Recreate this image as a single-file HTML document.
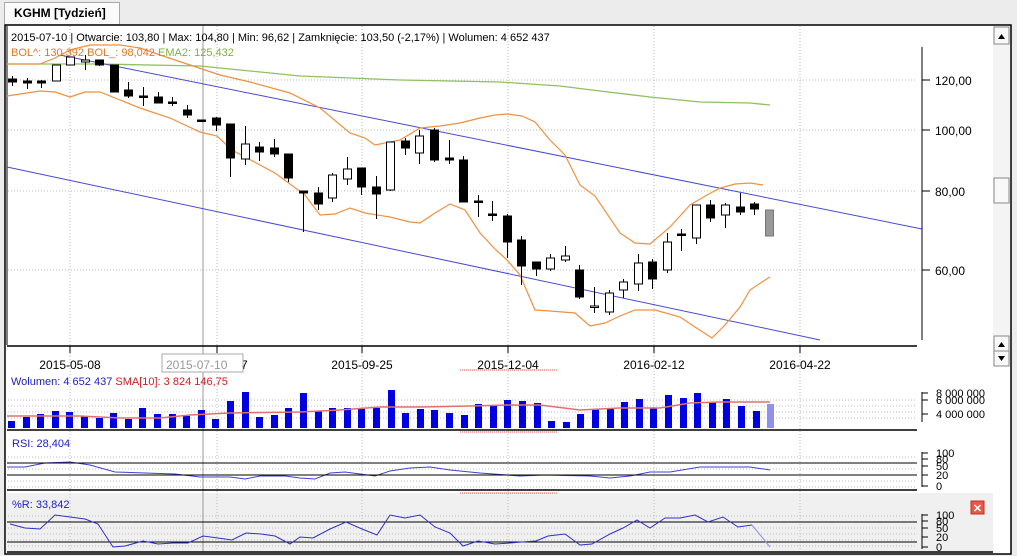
<!DOCTYPE html>
<html><head><meta charset="utf-8">
<style>
html,body{margin:0;padding:0;}
body{width:1017px;height:556px;overflow:hidden;background:#ececec;font-family:"Liberation Sans",sans-serif;position:relative;}
.tab{position:absolute;left:4px;top:2px;width:116px;height:22px;background:#fbfbfb;border:1px solid #a9a9a9;border-bottom:none;font-weight:bold;font-size:12px;line-height:20px;padding-left:9px;box-sizing:border-box;}
svg{position:absolute;left:0;top:0;}
</style></head><body>
<div class="tab">KGHM [Tydzień]</div>
<svg id="s" width="1017" height="556" xmlns="http://www.w3.org/2000/svg" font-family="Liberation Sans, sans-serif">
<rect x="5" y="25" width="1006" height="529" fill="#fff" stroke="#000" stroke-width="1.5"/>
<rect x="6" y="493" width="987" height="60" fill="#f0f0f0"/>
<g id="grid" stroke="#bbb" stroke-dasharray="1,2" stroke-width="1"></g>
<line x1="203" y1="26" x2="203" y2="552" stroke="#999"/>
<line x1="7" y1="26" x2="7" y2="345" stroke="#000"/>
<g id="main"></g>
<line x1="922" y1="47" x2="922" y2="340" stroke="#000"/>
<g font-size="12" fill="#000">
<line x1="922" y1="80" x2="930" y2="80" stroke="#000"/><text x="935" y="85">120,00</text>
<line x1="922" y1="130" x2="930" y2="130" stroke="#000"/><text x="935" y="135">100,00</text>
<line x1="922" y1="191" x2="930" y2="191" stroke="#000"/><text x="935" y="196">80,00</text>
<line x1="922" y1="270" x2="930" y2="270" stroke="#000"/><text x="935" y="275">60,00</text>
</g>
<line x1="7" y1="346" x2="917" y2="346" stroke="#000" stroke-width="1.5"/>
<g stroke="#000"><line x1="70" y1="346" x2="70" y2="353"/><line x1="217" y1="346" x2="217" y2="353"/><line x1="362" y1="346" x2="362" y2="353"/><line x1="508" y1="346" x2="508" y2="353"/><line x1="654" y1="346" x2="654" y2="353"/><line x1="800" y1="346" x2="800" y2="353"/></g>
<g font-size="12" fill="#000" text-anchor="middle">
<text x="70" y="369">2015-05-08</text><text x="217" y="369">2015-07-17</text><text x="362" y="369">2015-09-25</text><text x="508" y="369">2015-12-04</text><text x="654" y="369">2016-02-12</text><text x="800" y="369">2016-04-22</text>
</g>
<rect x="162" y="354" width="81" height="18" fill="#fff" stroke="#aaa"/>
<text x="166" y="369" font-size="12" fill="#999">2015-07-10</text>
<g stroke="#e05050" stroke-dasharray="1,1"><line x1="460" y1="370" x2="558" y2="370"/><line x1="460" y1="432" x2="558" y2="432"/><line x1="460" y1="493" x2="558" y2="493"/></g>
<text x="11" y="385" font-size="11" fill="#2020c0">Wolumen: 4 652 437 <tspan fill="#d02020">SMA[10]: 3 824 146,75</tspan></text>
<g id="vol"></g>
<line x1="7" y1="430" x2="917" y2="430" stroke="#000" stroke-width="1.5"/>
<line x1="7" y1="490" x2="917" y2="490" stroke="#000" stroke-width="1.5"/>
<line x1="7" y1="552" x2="993" y2="552" stroke="#000" stroke-width="1.5"/>
<text x="12" y="447" font-size="11" fill="#2020c0">RSI: 28,404</text>
<text x="12" y="508" font-size="11" fill="#2020c0">%R: 33,842</text>
<g id="ax" font-size="11" fill="#000"></g>
<rect x="971" y="501" width="13" height="13" fill="#e8584a" stroke="#c03020"/>
<text x="977.5" y="512" font-size="11" font-weight="bold" fill="#fff" text-anchor="middle">✕</text>
<rect x="993" y="26" width="17" height="340" fill="#f4f4f4"/>
<rect x="994" y="27" width="15" height="17" fill="#f8f8f8" stroke="#888"/><path d="M998 39h7l-3.5-5z" fill="#000"/>
<rect x="994" y="178" width="15" height="25" fill="#f8f8f8" stroke="#888"/>
<rect x="994" y="336" width="15" height="15" fill="#f8f8f8" stroke="#888"/><path d="M998 347h7l-3.5-5z" fill="#000"/>
<rect x="994" y="351" width="15" height="15" fill="#f8f8f8" stroke="#888"/><path d="M998 356h7l-3.5 5z" fill="#000"/>
<text x="11" y="41" font-size="11" fill="#000">2015-07-10 | Otwarcie: 103,80 | Max: 104,80 | Min: 96,62 | Zamknięcie: 103,50 (-2,17%)  | Wolumen: 4 652 437</text>
<text x="11" y="56" font-size="11" fill="#e07820">BOL^: 130,392  BOL_: 98,042 <tspan fill="#80b040">EMA2: 125,432</tspan></text>
</svg>
<script>
const NS="http://www.w3.org/2000/svg";
function el(p,t,a){const e=document.createElementNS(NS,t);for(const k in a)e.setAttribute(k,a[k]);document.getElementById(p).appendChild(e);return e;}
// grid
[80,130,191,270,400,406,412,418,457,463,469,475,481,487,516,522,528,534,540,546].forEach(y=>el("grid","line",{x1:8,y1:y,x2:917,y2:y}));
[70,217,362,508,654,800].forEach(x=>el("grid","line",{x1:x,y1:26,x2:x,y2:552}));
function pl(g,pts,c,w){el(g,"polyline",{points:pts,fill:"none",stroke:c,"stroke-width":w||1});}
pl("main","7,64 100,64 200,66 300,76 400,80 500,82 560,86 600,91 650,97 700,102 750,103 770,105","#90c060",1.3);
pl("main","60,55 922,229","#4848d8",1);pl("main","7,167 820,340","#4848d8",1);
pl("main","7,64 40,64 55,58 70,50 90,45 120,45 140,48 160,55 190,65 220,75 250,82 290,93 320,108 350,133 365,138 375,145 400,140 420,128 440,126 460,123 480,118 495,115 507,114 522,116 535,122 550,140 565,155 580,185 595,196 620,233 635,243 650,244 670,227 690,205 707,195 720,188 735,184 750,183 763,185","#f09040",1.2);
pl("main","7,96 40,91 55,92 70,97 85,92 100,92 120,100 140,108 170,118 200,132 217,136 232,150 275,173 305,195 320,215 335,214 350,208 365,213 390,217 410,222 420,223 435,213 450,204 465,210 480,233 495,249 507,260 520,275 535,310 550,311 575,313 590,326 605,323 620,316 635,310 655,310 680,317 695,327 712,338 725,325 740,307 750,290 765,280 770,277","#f09040",1.2);
const C=[[79,82,76,86,1],[81,83,78,89,1],[81,83,80,88,1],[65,81,65,81,0],[57,65,57,65,0],[60,62,55,70,0],[60,65,60,66,1],[65,92,65,92,1],[90,96,82,98,1],[96,96,87,106,1],[97,103,92,103,1],[102,102,97,106,1],[110,115,105,118,1],[120,120,120,120,1],[118,125,117,131,1],[124,158,124,177,1],[144,159,126,165,0],[147,152,142,161,1],[148,154,139,157,1],[154,178,154,182,1],[191,193,191,232,1],[193,204,187,210,1],[175,198,173,202,0],[169,179,157,185,0],[168,187,168,195,1],[187,194,176,219,1],[142,190,142,191,0],[141,148,138,155,1],[136,153,130,164,0],[130,160,128,162,1],[158,160,140,164,1],[160,202,156,202,1],[201,201,195,217,1],[214,214,201,221,1],[216,242,214,258,1],[240,266,236,285,1],[262,269,262,276,1],[258,269,254,271,0],[256,260,246,262,0],[270,297,265,299,1],[306,307,287,313,0],[293,312,290,315,0],[282,290,279,298,0],[263,284,254,291,0],[262,279,259,289,1],[242,270,233,273,0],[234,234,229,251,1],[205,238,205,244,0],[205,218,200,222,1],[205,215,203,228,0],[207,212,193,215,1],[204,209,202,215,1],[210,236,210,236,2]];
C.forEach((c,i)=>{const x=Math.round(12+i*14.55)+.5;
 el("main","line",{x1:x,y1:c[2],x2:x,y2:c[3],stroke:"#000"});
 const h=Math.max(c[1]-c[0],1.5);
 el("main","rect",{x:x-4,y:c[0],width:8,height:h,fill:c[4]==1?"#000":c[4]==2?"#999":"#fff",stroke:c[4]==2?"#777":"#000"});});
const V=[421,417,414,411,412,416,418,413,419,408,414,414,416,410,419,401,392,417,415,408,393,411,408,408,409,408,390,413,409,410,413,415,404,405,400,401,403,421,422,414,409,409,402,399,408,395,398,393,402,399,406,411,404];
V.forEach((v,i)=>{const x=Math.round(11+i*14.6);el("vol","rect",{x:x-3,y:v,width:7,height:428-v,fill:i==52?"#9090ee":"#0000e0"});});
pl("vol","7,416 40,416 80,416 120,418 160,418 190,415 230,413 300,412 340,410 380,407 420,407 470,406 508,405 540,405 580,410 620,408 660,408 690,403 720,402 770,402","#e07070",1.5);
pl("vol","7,467 25,467 45,463 70,462 90,465 115,472 145,473 175,474 200,477 230,477 245,479 260,476 285,476 300,478 315,479 330,473 345,472 375,476 390,471 410,468 430,467 450,470 480,473 520,476 545,475 590,476 610,478 630,476 650,472 670,472 700,467 730,467 750,467 770,470","#4040d0",1);
el("vol","line",{x1:7,y1:463,x2:917,y2:463,stroke:"#000"});el("vol","line",{x1:7,y1:475,x2:917,y2:475,stroke:"#000"});
el("vol","line",{x1:7,y1:522,x2:917,y2:522,stroke:"#000"});el("vol","line",{x1:7,y1:542,x2:917,y2:542,stroke:"#000"});
pl("vol","10,524 25,528 40,529 55,515 70,517 85,519 98,524 113,547 125,546 143,541 158,544 173,543 188,543 203,536 218,538 232,540 246,533 261,534 275,536 290,544 300,537 313,538 330,529 346,522 362,529 377,535 390,515 405,518 420,515 435,527 450,533 463,546 478,541 495,544 510,543 522,542 536,541 548,536 565,534 580,545 592,544 610,534 623,528 637,520 650,528 665,518 680,518 695,515 708,522 723,517 738,527 752,525","#3030c8",1);
pl("vol","752,525 770,547","#9090ee",1);
// right axes
function ax(ticks,y0,y1){el("ax","line",{x1:922,y1:y0,x2:922,y2:y1,stroke:"#000"});ticks.forEach(t=>{el("ax","line",{x1:922,y1:t[0],x2:928,y2:t[0],stroke:"#000"});const e=el("ax","text",{x:936,y:t[0]+4});e.textContent=t[1];});}
ax([[393,"8 000 000"],[400,"6 000 000"],[414,"4 000 000"]],392,422);
ax([[453,"100"],[459,"80"],[466,"50"],[475,"20"],[486,"0"]],452,487);
ax([[515,"100"],[521,"80"],[528,"50"],[537,"20"],[547,"0"]],514,549);
</script>
</body></html>
